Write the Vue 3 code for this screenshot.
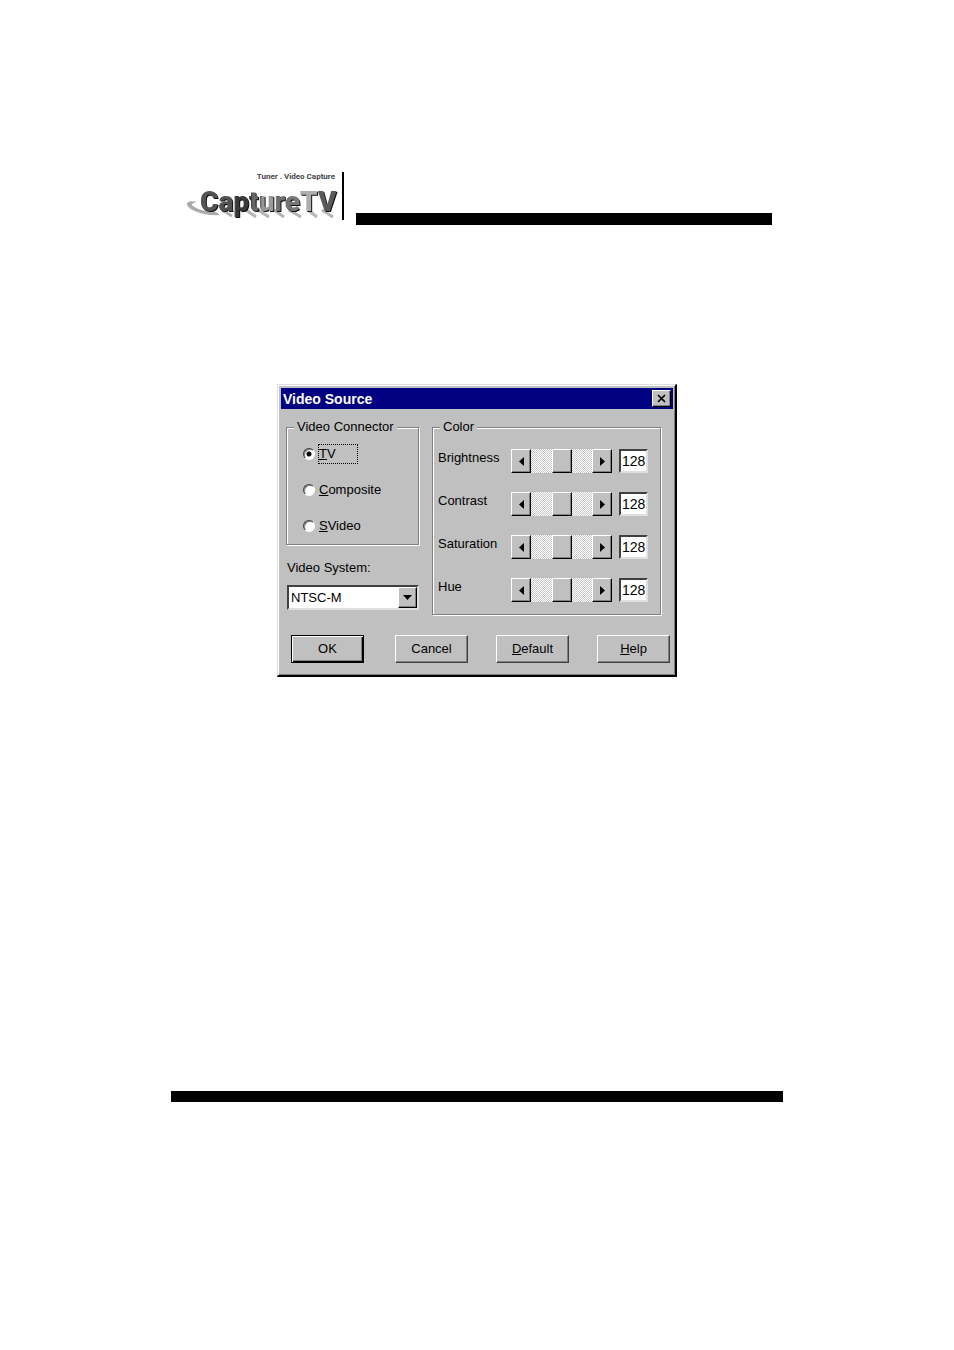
<script setup>
import { ref, reactive } from 'vue'

const connectors = [
  { id: 'tv', key: 'T', rest: 'V' },
  { id: 'composite', key: 'C', rest: 'omposite' },
  { id: 'svideo', key: 'S', rest: 'Video' },
]
const connector = ref('tv')

const system = ref('NTSC-M')
const systems = ['NTSC-M', 'PAL-B', 'PAL-M', 'SECAM']

const controls = reactive([
  { id: 'brightness', label: 'Brightness', value: 128 },
  { id: 'contrast', label: 'Contrast', value: 128 },
  { id: 'saturation', label: 'Saturation', value: 128 },
  { id: 'hue', label: 'Hue', value: 128 },
])

function step(control, by) {
  control.value = Math.min(255, Math.max(0, Number(control.value) + by))
}

function resetAll() {
  controls.forEach((c) => { c.value = 128 })
}
</script>

<template>
  <div class="page">
    <header class="masthead">
      <svg class="logo" width="152" height="56" viewBox="0 0 152 56" role="img" aria-label="CaptureTV">
        <defs>
          <filter id="soft" x="-10%" y="-30%" width="120%" height="160%">
            <feGaussianBlur stdDeviation="0.7" />
          </filter>
          <linearGradient id="ink" gradientUnits="userSpaceOnUse" x1="14" y1="0" x2="149" y2="0">
            <stop offset="0" stop-color="#555" />
            <stop offset="0.26" stop-color="#505050" />
            <stop offset="0.27" stop-color="#383838" />
            <stop offset="0.38" stop-color="#383838" />
            <stop offset="0.39" stop-color="#666" />
            <stop offset="0.45" stop-color="#666" />
            <stop offset="0.46" stop-color="#999" />
            <stop offset="0.56" stop-color="#999" />
            <stop offset="0.57" stop-color="#6c6c6c" />
            <stop offset="0.74" stop-color="#7c7c7c" />
            <stop offset="0.75" stop-color="#adadad" />
            <stop offset="0.865" stop-color="#adadad" />
            <stop offset="0.87" stop-color="#5a5a5a" />
            <stop offset="1" stop-color="#5a5a5a" />
          </linearGradient>
        </defs>
        <g filter="url(#soft)">
          <path d="M11 33 C5 31 0 33 1 36 C4 42 18 47 34 46 L30 43 C18 43 8 39 6 36 C6 34 8 34 11 33 Z" fill="#aaa" />
          <path d="M36 41 L46 47 M60 41 L70 48 M72 41 L83 48 M88 41 L98 48 M103 41 L115 48 M122 41 L131 48 M136 41 L147 48" fill="none" stroke="#b4b4b4" stroke-width="3" />
        </g>
        <text class="tagline" x="149" y="10" text-anchor="end">Tuner . Video Capture</text>
        <text class="wordmark" x="14" y="42" fill="url(#ink)">CaptureTV</text>
      </svg>
      <div class="bar"></div>
    </header>

    <main class="content">
      <section class="dialog" role="dialog" aria-labelledby="dialog-title">
        <div class="titlebar">
          <h1 id="dialog-title">Video Source</h1>
          <button class="close" type="button" aria-label="Close">
            <svg width="9" height="9" viewBox="0 0 9 9"><path d="M1 1 L8 8 M8 1 L1 8" stroke="#000" stroke-width="1.7" /></svg>
          </button>
        </div>

        <div class="panels">
          <div class="left">
            <fieldset class="group">
              <legend>Video Connector</legend>
              <div class="radios">
                <label v-for="c in connectors" :key="c.id" class="radio">
                  <input v-model="connector" type="radio" name="connector" :value="c.id">
                  <span class="radio-text" :class="{ focused: connector === c.id }"><u>{{ c.key }}</u>{{ c.rest }}</span>
                </label>
              </div>
            </fieldset>
            <label class="system-label" for="system">Video System:</label>
            <div class="combo">
              <select id="system" v-model="system">
                <option v-for="s in systems" :key="s">{{ s }}</option>
              </select>
              <span class="drop" aria-hidden="true">
                <svg width="9" height="5" viewBox="0 0 9 5"><path d="M0 0 H9 L4.5 5 Z" /></svg>
              </span>
            </div>
          </div>

          <fieldset class="group color">
            <legend>Color</legend>
            <div class="rows">
              <div v-for="c in controls" :key="c.id" class="row">
                <label :for="c.id">{{ c.label }}</label>
                <div class="scroller">
                  <button type="button" :aria-label="`Decrease ${c.label}`" @click="step(c, -1)">
                    <svg width="5" height="9" viewBox="0 0 5 9"><path d="M5 0 V9 L0 4.5 Z" /></svg>
                  </button>
                  <input :id="c.id" v-model.number="c.value" type="range" min="0" max="255">
                  <button type="button" :aria-label="`Increase ${c.label}`" @click="step(c, 1)">
                    <svg width="5" height="9" viewBox="0 0 5 9"><path d="M0 0 V9 L5 4.5 Z" /></svg>
                  </button>
                </div>
                <input v-model.number="c.value" class="value" type="text" :aria-label="`${c.label} value`">
              </div>
            </div>
          </fieldset>
        </div>

        <div class="actions">
          <button class="btn default" type="button">OK</button>
          <button class="btn" type="button">Cancel</button>
          <button class="btn" type="button" @click="resetAll"><u>D</u>efault</button>
          <button class="btn" type="button"><u>H</u>elp</button>
        </div>
      </section>
    </main>

    <footer class="footer-bar"></footer>
  </div>
</template>

<style>
body {
  background: #fff;
}
</style>

<style scoped>
.page {
  box-sizing: border-box;
  max-width: 612px;
  margin: 0 auto;
  padding: 169px 0 248px;
  font: 13px/18px "Liberation Sans", Arial, sans-serif;
  color: #000;
}

.page *,
.page *::before {
  box-sizing: border-box;
}

button,
input,
select {
  margin: 0;
  font: inherit;
  color: inherit;
  border-radius: 0;
}

.masthead {
  display: flex;
  align-items: flex-end;
  padding: 0 11px 0 15px;
}

.logo {
  flex: none;
}

.tagline {
  font: bold 8px Roboto, "Liberation Sans", sans-serif;
  fill: #444;
}

.wordmark {
  font: 900 28px Roboto, "Liberation Sans", sans-serif;
  filter: drop-shadow(1px 1px 0 #111);
}

.masthead .bar {
  position: relative;
  flex: 1;
  height: 12px;
  margin-left: 18px;
  background: #000;
}

.masthead .bar::before {
  content: "";
  position: absolute;
  left: -14px;
  bottom: 5px;
  width: 2px;
  height: 48px;
  background: #000;
}

.content {
  padding-top: 159px;
}

.dialog {
  max-width: 400px;
  margin: 0 auto;
  padding: 3px 2px 12px 3px;
  background: #c0c0c0;
  border: 1px solid;
  border-width: 1px 2px 2px 1px;
  border-color: #dfdfdf #000 #000 #dfdfdf;
  box-shadow: inset 1px 1px #fff, inset -1px -1px #808080;
}

.titlebar {
  display: flex;
  align-items: center;
  justify-content: space-between;
  height: 21px;
  padding: 0 2px;
  background: #000080;
  color: #fff;
}

h1 {
  margin: 0;
  font-size: 14px;
  line-height: 20px;
}

.close,
.scroller button,
.drop {
  display: flex;
  align-items: center;
  justify-content: center;
  padding: 0;
  background: #c0c0c0;
  border: 1px solid;
  border-color: #fff #000 #000 #fff;
  box-shadow: inset -1px -1px #808080;
}

.close {
  width: 19px;
  height: 17px;
}

.panels {
  display: flex;
  gap: 13px;
  padding: 9px 12px 0 5px;
}

.left {
  width: 133px;
  display: flex;
  flex-direction: column;
}

.group {
  min-width: 0;
  margin: 0;
  padding: 0;
  border: 1px solid #808080;
  box-shadow: 1px 1px #fff, inset 1px 1px #fff;
}

legend {
  margin-left: 7px;
  padding: 0 3px;
  background: #c0c0c0;
}

.radios {
  display: flex;
  flex-direction: column;
  gap: 16px;
  padding: 8px 0 8px 16px;
}

.radio {
  display: flex;
  align-items: center;
  gap: 3px;
  height: 20px;
}

.radio input {
  appearance: none;
  width: 12px;
  height: 12px;
  border: 1px solid;
  border-color: #404040 #fff #fff #404040;
  border-radius: 50%;
  background: #fff;
  box-shadow: inset 1px 1px #808080;
}

.radio input:checked {
  background: radial-gradient(circle, #000 2px, #fff 3px);
}

.radio-text {
  line-height: 18px;
  border: 1px solid transparent;
}

.radio-text.focused {
  width: 40px;
  border: 1px dotted #000;
}

.system-label {
  margin-top: 14px;
  padding-left: 1px;
}

.combo {
  position: relative;
  margin: 8px 0 0 1px;
}

select {
  display: block;
  appearance: none;
  width: 100%;
  height: 25px;
  padding: 0 22px 0 2px;
  background: #fff;
  border: 2px solid;
  border-color: #404040 #dfdfdf #dfdfdf #404040;
}

.drop {
  position: absolute;
  top: 2px;
  right: 2px;
  bottom: 2px;
  width: 19px;
  pointer-events: none;
}

.color {
  flex: 1;
}

.rows {
  display: flex;
  flex-direction: column;
  gap: 19px;
  padding: 13px 12px 12px 5px;
}

.row {
  display: flex;
  align-items: flex-start;
}

.row label {
  width: 73px;
}

.scroller {
  display: flex;
  flex: 1;
  min-width: 0;
}

.scroller button {
  flex: none;
  width: 20px;
  height: 24px;
}

.scroller input {
  appearance: none;
  flex: 1;
  min-width: 0;
  width: 20px;
  height: 24px;
  background: repeating-conic-gradient(#fff 0% 25%, #c8c8c8 0% 50%) 0 0 / 2px 2px;
}

.scroller input::-webkit-slider-thumb {
  appearance: none;
  box-sizing: border-box;
  width: 20px;
  height: 24px;
  background: #c0c0c0;
  border: 1px solid;
  border-color: #fff #000 #000 #fff;
  box-shadow: inset -1px -1px #808080;
}

.value {
  width: 29px;
  height: 24px;
  margin-left: 7px;
  padding: 0 0 0 1px;
  font-size: 14px;
  background: #fff;
  border: 2px solid;
  border-color: #404040 #dfdfdf #dfdfdf #404040;
}

.actions {
  display: flex;
  gap: 28px;
  padding: 20px 3px 0 10px;
}

.btn {
  width: 73px;
  height: 28px;
  padding: 0;
  background: #c0c0c0;
  border: 1px solid;
  border-color: #fff #404040 #404040 #fff;
  box-shadow: inset -1px -1px #808080;
}

.btn.default {
  margin-right: auto;
  border-color: #000;
  box-shadow: inset 1px 1px #fff, inset -1px -1px #000, inset -2px -2px #808080;
}

.footer-bar {
  height: 11px;
  margin-top: 414px;
  background: #000;
}
</style>
